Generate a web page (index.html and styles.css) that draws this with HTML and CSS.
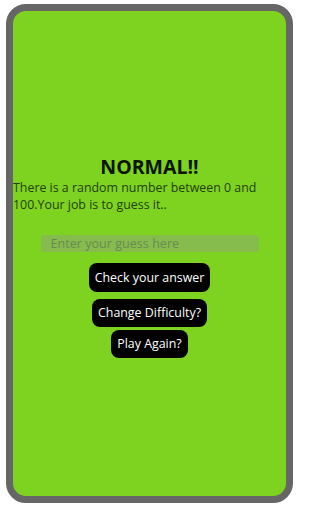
FILE: index.html
```html
<!DOCTYPE html>
<html lang="en">
<head>
<meta charset="utf-8">
<title>Guess the number</title>
<link rel="stylesheet" href="styles.css">
</head>
<body>
<div class="phone">
  <div class="screen">
    <main class="game">
      <h1 class="title">NORMAL!!</h1>
      <p class="intro">There is a random number between 0 and 100.Your job is to guess it..</p>
      <input class="guess" type="text" placeholder="Enter your guess here">
      <button class="btn btn-check">Check your answer</button>
      <button class="btn btn-diff">Change Difficulty?</button>
      <button class="btn btn-again">Play Again?</button>
    </main>
  </div>
</div>
</body>
</html>
```

FILE: styles.css
```css
html, body {
  margin: 0;
  padding: 0;
  background: #ffffff;
}
body {
  padding: 4px 9px 9px 6px;
  font-family: "Open Sans", "Noto Sans", sans-serif;
}
.phone {
  width: 287px;
  height: 499px;
  box-sizing: border-box;
  border: 7px solid #666666;
  border-radius: 20px;
  background: #7ed321;
  overflow: hidden;
}
.screen {
  height: 100%;
  display: flex;
  flex-direction: column;
  justify-content: center;
}
.game {
  display: flex;
  flex-direction: column;
  align-items: center;
  padding-top: 5px;
}
.title {
  margin: 0;
  font-size: 19.5px;
  line-height: 24px;
  font-weight: 700;
  color: #0a1400;
}
.intro {
  align-self: stretch;
  margin: 0;
  font-size: 12.4px;
  line-height: 17px;
  color: #22400a;
}
.guess {
  margin-top: 22px;
  width: 218px;
  height: 17px;
  box-sizing: border-box;
  border: none;
  border-radius: 3px;
  padding: 0 10px;
  background: #86bb4e;
  font-family: inherit;
  font-size: 12.6px;
  color: #5f7a4a;
  outline: none;
}
.guess::placeholder {
  color: #6a8a52;
}
.btn {
  border: none;
  border-radius: 8px;
  background: #000000;
  color: #ffffff;
  font-family: inherit;
  font-size: 12.4px;
  height: 29px;
  padding: 0 6px;
}
.btn-check {
  margin-top: 11px;
}
.btn-diff {
  margin-top: 7px;
  height: 28px;
}
.btn-again {
  margin-top: 3px;
  height: 28px;
}
```
